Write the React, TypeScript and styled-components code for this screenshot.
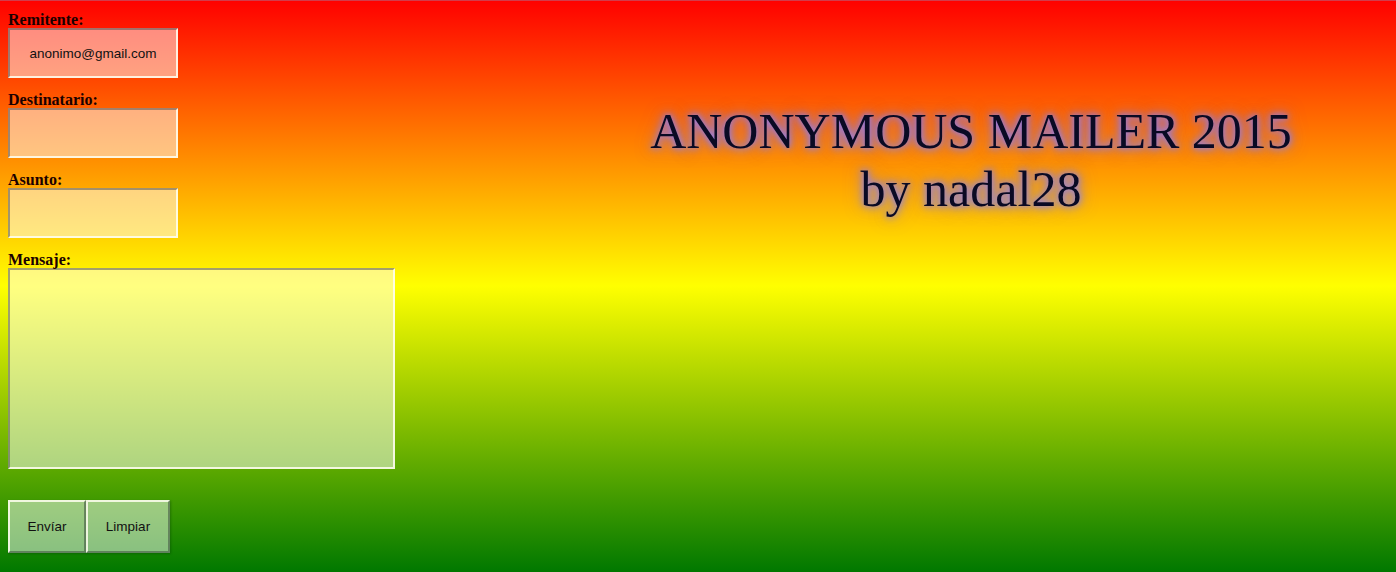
import React from 'react'
import styled, { createGlobalStyle } from 'styled-components'

const GlobalStyle = createGlobalStyle`
  html, body {
    margin: 0;
    padding: 0;
    height: 100%;
  }
  body {
    font-family: 'Liberation Serif', 'Times New Roman', serif;
    background: linear-gradient(to bottom, #ff0000 0%, #ffff00 50%, #007800 100%);
    background-attachment: fixed;
  }
`

const Page = styled.div`
  display: flex;
  box-sizing: border-box;
  min-height: 100vh;
  padding: 9px 8px 0 8px;
  border-top: 1px solid #d23c4c;
`

const Form = styled.form`
  width: 546px;
  flex: none;
`

const Label = styled.label`
  display: block;
  box-sizing: border-box;
  height: 18px;
  padding-top: 1px;
  font-weight: bold;
  font-size: 16px;
  line-height: 17px;
  color: #1a0000;
`

const fieldBorder = `
  box-sizing: border-box;
  border-width: 2px;
  border-style: solid;
  border-color: rgba(90, 90, 90, 0.55) rgba(255, 255, 240, 0.85) rgba(255, 255, 240, 0.85) rgba(90, 90, 90, 0.55);
  background: rgba(255, 255, 255, 0.5);
  font-family: 'Liberation Sans', Arial, sans-serif;
  font-size: 13.5px;
  color: #111;
  outline: none;
`

const Field = styled.input`
  ${fieldBorder}
  display: block;
  width: 170px;
  height: 50px;
  margin: 0 0 12px 0;
  padding: 0 4px;
  text-align: center;
`

const Message = styled.textarea`
  ${fieldBorder}
  display: block;
  width: 387px;
  height: 201px;
  margin: 0 0 31px 0;
  padding: 4px;
  resize: none;
`

const ButtonRow = styled.div`
  display: flex;
`

const Button = styled.button<{ $w: number }>`
  box-sizing: border-box;
  width: ${(p) => p.$w}px;
  height: 53px;
  margin: 0;
  padding: 0;
  border-width: 2px;
  border-style: solid;
  border-color: rgba(255, 255, 240, 0.85) rgba(70, 90, 70, 0.6) rgba(70, 90, 70, 0.6) rgba(255, 255, 240, 0.85);
  background: rgba(255, 255, 255, 0.5);
  box-shadow: 1px 1px 2px rgba(0, 60, 0, 0.35);
  font-family: 'Liberation Sans', Arial, sans-serif;
  font-size: 13.5px;
  color: #111;
  cursor: pointer;
`

const TitleColumn = styled.div`
  flex: 1;
  padding-top: 92px;
  text-align: center;
`

const Title = styled.h1`
  margin: 0;
  font-family: 'Liberation Serif', 'Times New Roman', serif;
  font-weight: normal;
  font-size: 50px;
  line-height: 58px;
  color: #0a0a24;
  text-shadow: 0 0 6px #8a80ff, 0 0 12px rgba(120, 110, 255, 0.8), 0 0 18px rgba(120, 110, 255, 0.5);
`

const App: React.FC = () => (
  <>
    <GlobalStyle />
    <Page>
      <Form onSubmit={(e) => e.preventDefault()}>
        <Label>Remitente:</Label>
        <Field defaultValue="anonimo@gmail.com" />
        <Label>Destinatario:</Label>
        <Field />
        <Label>Asunto:</Label>
        <Field />
        <Label>Mensaje:</Label>
        <Message />
        <ButtonRow>
          <Button $w={78} type="submit">Envíar</Button>
          <Button $w={84} type="reset">Limpiar</Button>
        </ButtonRow>
      </Form>
      <TitleColumn>
        <Title>
          ANONYMOUS MAILER 2015
          <br />
          by nadal28
        </Title>
      </TitleColumn>
    </Page>
  </>
)

export default App
